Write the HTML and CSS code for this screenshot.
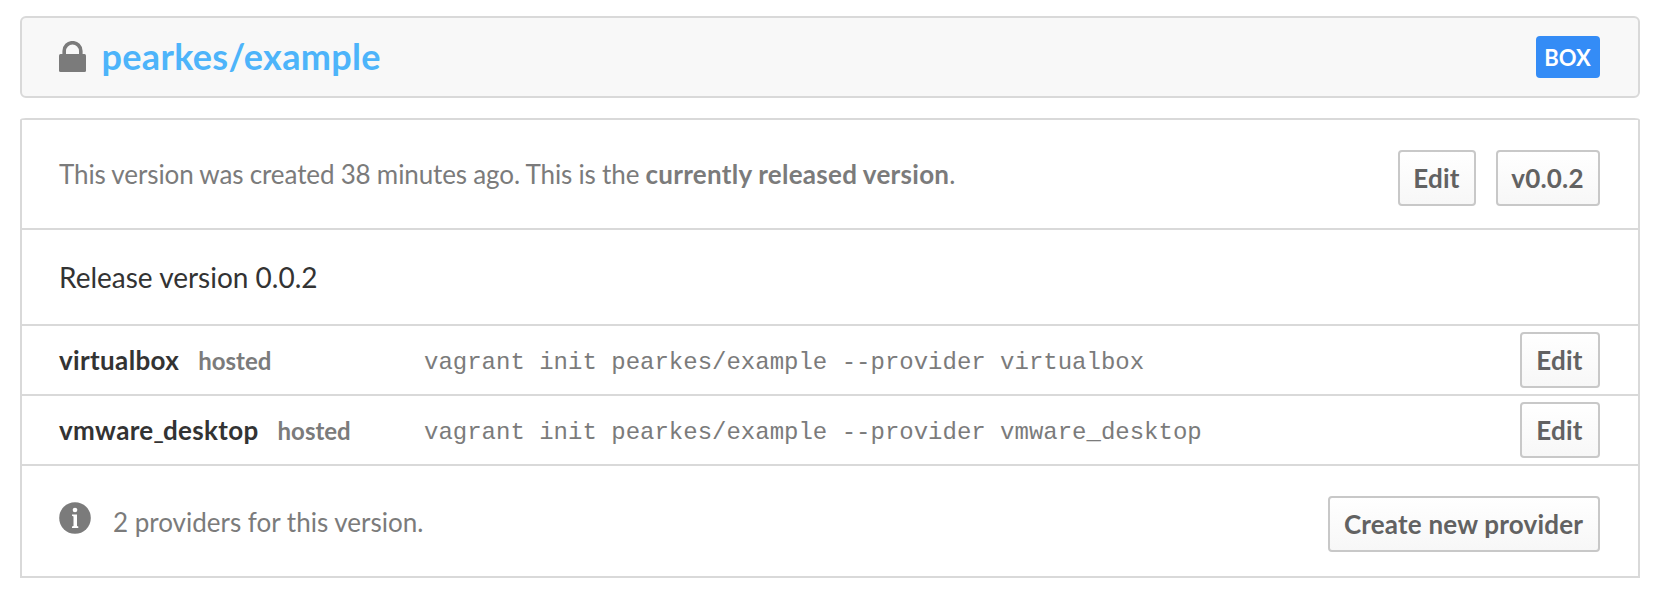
FILE: index.html
```html
<!DOCTYPE html>
<html lang="en">
<head>
<meta charset="utf-8">
<title>pearkes/example</title>
<link rel="stylesheet" href="styles.css">
</head>
<body>
<header class="title-bar">
  <svg class="lock" width="27" height="31" viewBox="0 0 27 31"><path d="M5.2 15V10a8.3 8.3 0 0 1 16.6 0V15" fill="none" stroke="#7b7b7b" stroke-width="3.6"/><rect y="13" width="27" height="18" rx="1.5" fill="#7b7b7b"/></svg>
  <a class="name">pearkes/example</a>
  <span class="badge">BOX</span>
</header>
<main class="panel">
  <section class="row status">
    <p class="muted">This version was created 38 minutes ago. This is the <b>currently released version</b>.</p>
    <div class="actions"><button class="btn edit-version">Edit</button><button class="btn version">v0.0.2</button></div>
  </section>
  <section class="row description"><p>Release version 0.0.2</p></section>
  <section class="row provider"><div class="label"><b>virtualbox</b><span>hosted</span></div><code>vagrant init pearkes/example --provider virtualbox</code><button class="btn edit">Edit</button></section>
  <section class="row provider"><div class="label"><b>vmware<i>_</i>desktop</b><span>hosted</span></div><code>vagrant init pearkes/example --provider vmware_desktop</code><button class="btn edit">Edit</button></section>
  <section class="row summary">
    <svg class="info" width="32" height="32" viewBox="0 0 32 32"><circle cx="16" cy="16" r="15.8" fill="#7b7b7b"/><circle cx="16" cy="8" r="2.3" fill="#fff"/><path d="M13 12.5h5V24l1.3.6V26H13v-1.4l1.5-.6v-9.6l-1.5-.6z" fill="#fff"/></svg>
    <p class="muted">2 providers for this version.</p>
    <button class="btn create">Create new provider</button>
  </section>
</main>
</body>
</html>
```
FILE: styles.css
```css
* { box-sizing: border-box; }
body { margin: 0; padding: 16px 20px 0; background: #fff; font-family: Lato, sans-serif; font-size: 26px; color: #333; }
p { margin: 0; }
b { font-weight: 700; letter-spacing: .35px; }
.title-bar { height: 82px; border: 2px solid #d9d9d9; border-radius: 6px; background: #f8f8f8; padding: 0 38px 0 37px; display: flex; align-items: center; }
.lock { margin: 0 15.5px 1px 0; }
.name { margin-top: -2px; font-size: 36px; font-weight: 700; letter-spacing: .32px; color: #4db4fa; }
.badge { margin-left: auto; width: 64px; height: 42px; padding-right: 1px; border-radius: 4px; background: #348cf6; color: #fff; font-size: 22px; font-weight: 700; line-height: 43px; text-align: center; }
.panel { margin-top: 20px; border: 2px solid #d9d9d9; border-radius: 6px 6px 0 0 / 2px 2px 0 0; }
.row { display: flex; align-items: center; padding: 0 38px 0 37px; border-bottom: 2px solid #d9d9d9; }
.row:last-child { border-bottom: 0; }
.muted { color: #7b7b7b; }
.status { height: 110px; }
.status p { letter-spacing: -.1px; word-spacing: -.3px; }
.status b { letter-spacing: .28px; }
.actions { display: flex; gap: 20px; margin: 8px 0 0 auto; }
.description { height: 96px; font-size: 28px; }
.provider { height: 70px; }
.label { width: 365px; display: flex; align-items: baseline; gap: 19px; }
.label i { font-size: 22px; font-style: normal; letter-spacing: -1px; }
.label span { color: #7b7b7b; font-size: 24px; font-weight: 700; }
code { padding-top: 4px; font: 24px "Liberation Mono", monospace; color: #7b7b7b; }
.btn { height: 56px; padding: 0 1px 0 0; border: 2px solid #c8c8c8; border-radius: 4px; background: linear-gradient(#fff, #f7f7f7); color: #626262; font: 700 26px Lato, sans-serif; letter-spacing: .2px; margin-left: auto; }
.edit-version { width: 78px; }
.version { width: 104px; }
.edit { width: 80px; }
.create { width: 272px; margin-top: 6px; }
.summary { height: 110px; }
.summary p { margin-top: 2px; }
.info { margin: 0 22px 6px 0; }
```
